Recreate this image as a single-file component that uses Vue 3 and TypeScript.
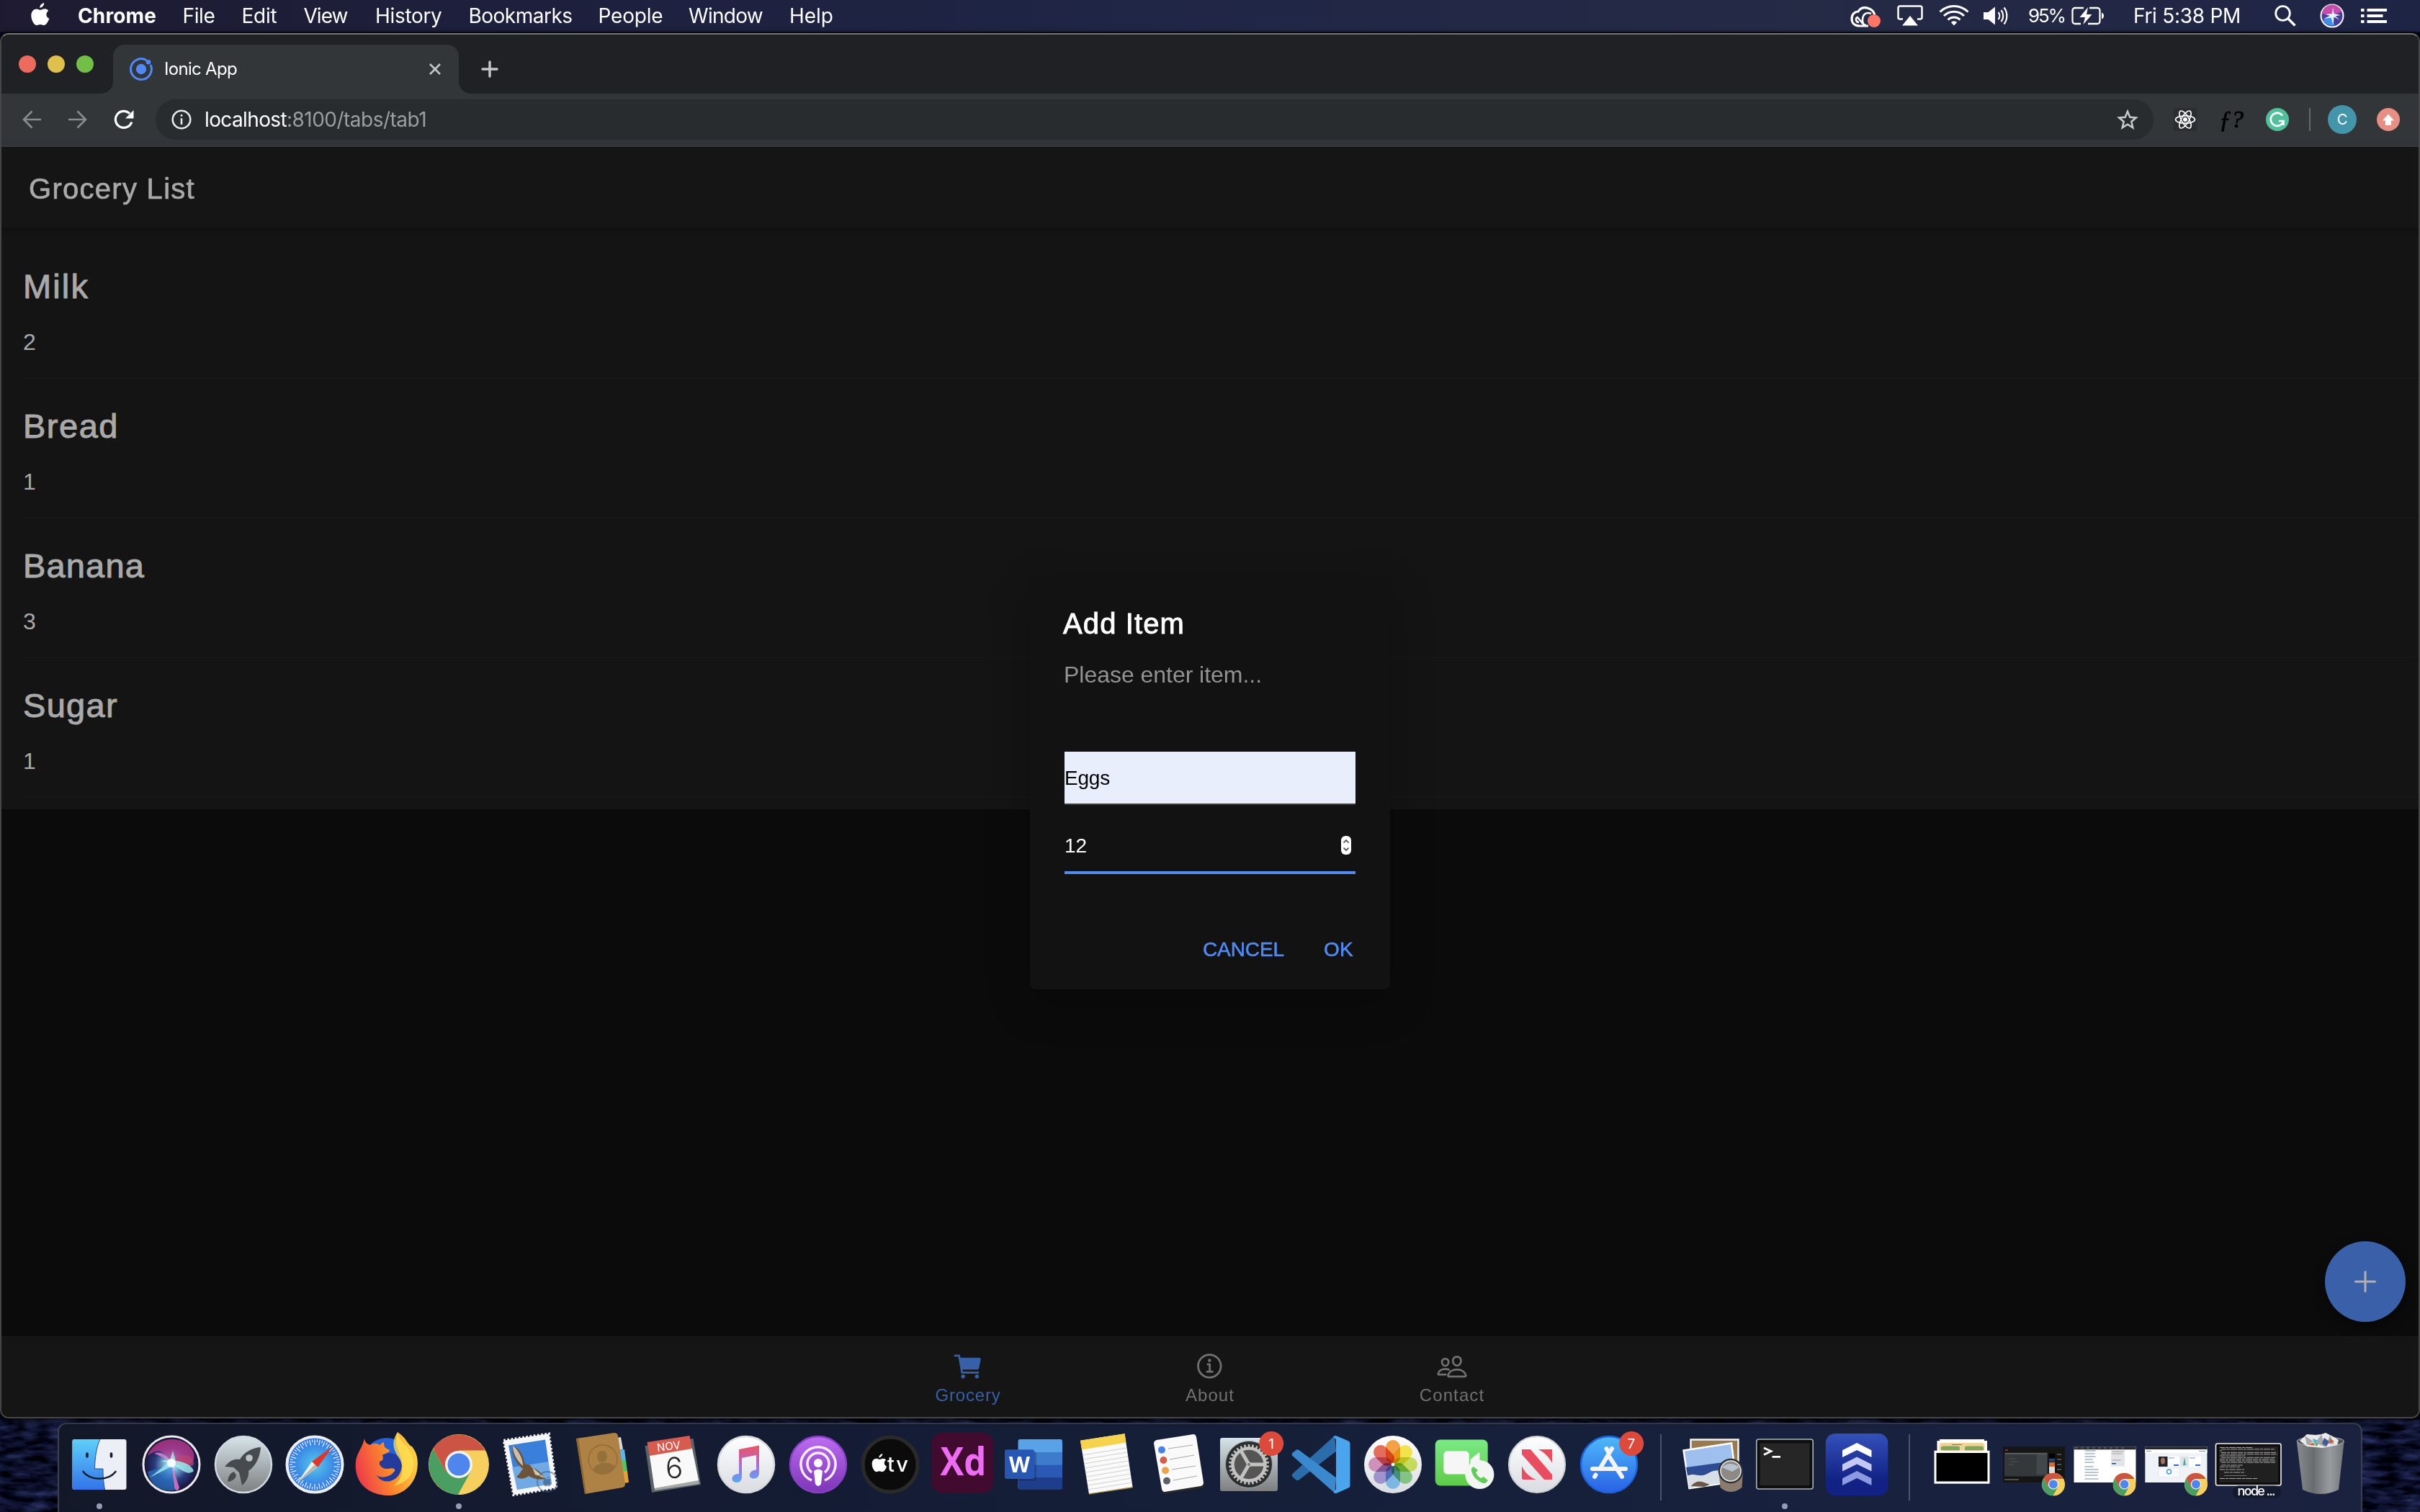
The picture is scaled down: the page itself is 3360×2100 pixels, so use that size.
<script setup lang="ts">
import type { Directive } from 'vue'

interface MenuEntry { label: string; slot: number; text: number; bold?: boolean }
interface GroceryItem { name: string; qty: number }

const menus: MenuEntry[] = [
  { label: 'Chrome', slot: 145.5, text: 109, bold: true },
  { label: 'File', slot: 82, text: 45 },
  { label: 'Edit', slot: 86, text: 49 },
  { label: 'View', slot: 99.5, text: 61 },
  { label: 'History', slot: 129.5, text: 92.5 },
  { label: 'Bookmarks', slot: 180, text: 144 },
  { label: 'People', slot: 125.5, text: 90 },
  { label: 'Window', slot: 140, text: 103 },
  { label: 'Help', slot: 80, text: 61 },
]

const groceries: GroceryItem[] = [
  { name: 'Milk', qty: 2 },
  { name: 'Bread', qty: 1 },
  { name: 'Banana', qty: 3 },
  { name: 'Sugar', qty: 1 },
]
const nameWidths = [92, 133, 169, 132]

const petals = ['#f29a38', '#f3e03c', '#c3d84e', '#7cc07c', '#74b2e2', '#9a8cc8', '#cc88b4', '#e2604e']
const teeth = Array.from({ length: 30 }, (_, i) => i * 12)
const ticks = Array.from({ length: 60 }, (_, i) => i * 6)

// Tracks a label so that it spans the given width
const vFit: Directive<HTMLElement, number> = {
  mounted(el, { value }) {
    const n = (el.textContent ?? '').length
    el.style.letterSpacing = `${(value - el.getBoundingClientRect().width) / n}px`
  },
}
</script>

<template>
  <div class="desktop">
    <svg class="defs" width="0" height="0">
      <defs>
        <filter id="waves" x="0" y="0" width="100%" height="100%" color-interpolation-filters="sRGB">
          <feTurbulence type="fractalNoise" baseFrequency="0.03 0.11" numOctaves="4" seed="6" />
          <feColorMatrix values="0.3 0 0 0 -0.1  0.35 0 0 0 -0.11  0.6 0 0 0 -0.13  0 0 0 0 1" />
        </filter>
        <linearGradient id="silver" x1="0" y1="0" x2="0" y2="1">
          <stop offset="0" stop-color="#d6e4ea" /><stop offset="1" stop-color="#7e7f80" />
        </linearGradient>
        <linearGradient id="pearl" x1="0" y1="0" x2="0" y2="1">
          <stop offset="0" stop-color="#ffffff" /><stop offset="1" stop-color="#d9dce2" />
        </linearGradient>
        <radialGradient id="siri" cx=".5" cy=".5" r=".5">
          <stop offset="0" stop-color="#e8ffff" /><stop offset=".2" stop-color="#8ac6ea" />
          <stop offset=".6" stop-color="#2a3a7c" /><stop offset="1" stop-color="#150f30" />
        </radialGradient>
        <symbol id="chrome" viewBox="0 0 84 84">
          <circle cx="42" cy="42" r="42" fill="#f6cf5f" />
          <path d="M42 42L6.500 19.500A42 42 0 0 1 78.500 22.500H42z" fill="#cc5444" />
          <path d="M6.500 20.500A42 42 0 0 0 41 84L59 51L42 42L24 52z" fill="#4a9e62" />
          <path d="M6.500 20.500L24 52L42 42L42 22z" fill="#cc5444" />
          <path d="M78.500 22.800A42 42 0 0 1 41 84L60 50L54 23z" fill="#f6cf5f" />
          <circle cx="42" cy="42" r="19" fill="#f4f4f4" />
          <circle cx="42" cy="42" r="15.500" fill="#4f86ee" />
        </symbol>
        <symbol id="apple" viewBox="0 0 28 34">
          <path d="M19.500 0c.3 3-2.300 7-6.300 7.300C12.800 4.200 16 .6 19.500 0zM26 11.600c-4.700 3.300-3.700 9.600 1.200 11.600C25.500 28 22.500 33 19.300 33c-2.200 0-2.900-1.200-5.400-1.200S10.600 33 8.500 33C5 33 .5 25.500.5 18.500.5 12.500 4.300 8.900 8.400 8.900c2.600 0 4.200 1.500 5.900 1.500 1.600 0 3.500-1.700 6.500-1.700 2.200 0 4.200 1.200 5.200 2.900z" />
        </symbol>
      </defs>
    </svg>

    <header class="menubar">
      <svg class="apple" width="28" height="32" viewBox="0 0 28 34"><use href="#apple" fill="#fff" /></svg>
      <nav class="menus">
        <div v-for="m in menus" :key="m.label" :style="{ width: m.slot + 'px' }">
          <span v-fit="m.text" class="fit" :class="{ bold: m.bold }">{{ m.label }}</span>
        </div>
      </nav>
      <div class="status">
        <svg class="s-cc" width="44" height="30" viewBox="0 0 44 30" fill="none" stroke="#fff" stroke-width="3.200">
          <path d="M25 27H13C5 27 2 22 2 17c0-7 5-10 9-10C14 2 19 0.500 25 2.500c5 1.500 8 6 9 9" />
          <path d="M22 26c-5 0-5-5-5-7 0-8 5-12 12-9M20 27L10 15c-3 0-3 7 2 7" stroke-width="2.600" />
          <circle cx="33" cy="20" r="9" fill="#ff7566" stroke="none" />
        </svg>
        <svg class="s-air" width="36" height="30" viewBox="0 0 36 30">
          <path d="M8 19.500H4a2.500 2.500 0 0 1-2.500-2.500V4A2.500 2.500 0 0 1 4 1.500h28A2.500 2.500 0 0 1 34.500 4v13a2.500 2.500 0 0 1-2.500 2.500h-4" fill="none" stroke="#fff" stroke-width="2.500" />
          <path d="M18 15l11 13.500H7z" fill="#fff" />
        </svg>
        <svg class="s-wifi" width="42" height="30" viewBox="0 0 42 30" fill="none" stroke="#fff" stroke-width="3">
          <path d="M1.500 10.500a27.500 27.500 0 0 1 39 0M7 16a19.700 19.700 0 0 1 28 0M12.500 21.500a12 12 0 0 1 17 0" />
          <path d="M21 29.500l-4.200-4.500a6 6 0 0 1 8.400 0z" fill="#fff" stroke="none" />
        </svg>
        <svg class="s-vol" width="34" height="26" viewBox="0 0 34 26">
          <path d="M0 8h6.500L16 0.500v25L6.500 18H0z" fill="#fff" />
          <path d="M20.500 8a8 8 0 0 1 0 10M24.500 5a13 13 0 0 1 0 16M28.500 1.500a19 19 0 0 1 0 23" fill="none" stroke="#fff" stroke-width="2.200" />
        </svg>
        <div class="s-pct"><span v-fit="51" class="fit">95%</span></div>
        <svg class="s-bat" width="46" height="26" viewBox="0 0 46 26">
          <path d="M17 2H5a3.500 3.500 0 0 0-3.500 3.500v15A3.500 3.500 0 0 0 5 24h8M25 2h11a3.500 3.500 0 0 1 3.500 3.500v15A3.500 3.500 0 0 1 36 24H23" fill="none" stroke="#fff" stroke-width="2.300" />
          <path d="M42 8.500c4 1 4 8 0 9z" fill="#fff" />
          <path d="M23 1L11.500 15H19l-2.500 10L28.500 11H21z" fill="#fff" />
        </svg>
        <div class="s-clock"><span v-fit="149" class="fit">Fri 5:38 PM</span></div>
        <svg class="s-find" width="30" height="30" viewBox="0 0 30 30" fill="none" stroke="#fff" stroke-width="2.800">
          <circle cx="11.500" cy="11.500" r="9.800" /><path d="M18.500 18.500L28.500 28.500" stroke-width="3.400" />
        </svg>
        <svg class="s-siri" width="34" height="34" viewBox="0 0 34 34">
          <circle cx="17" cy="17" r="15.500" fill="#493d9c" stroke="#fff" stroke-width="2" />
          <path d="M2.500 14a14.500 14.500 0 0 1 28-3L17 17z" fill="#c44cae" />
          <path d="M4 23L17 15l3 15a14 14 0 0 1-16-7z" fill="#3f8fe8" />
          <path d="M5 21l9-4-6-2 9-1 1-9 1.500 9 9 2-7 1.500 6 5-8-4-1 11-3-10z" fill="#e6f6ff" />
        </svg>
        <svg width="36" height="20" viewBox="0 0 36 20" fill="#fff">
          <path d="M0 0h4.500v4H0zM8.500 0H36v4H8.500zM0 8h4.500v4H0zM8.500 8h22v4h-22zM0 16h4.500v4H0zM8.500 16H36v4H8.500z" />
        </svg>
      </div>
    </header>

    <main class="window">
      <div class="strip">
        <div class="lights"><i class="red" /><i class="yellow" /><i class="green" /></div>
        <div class="tab">
          <svg width="32" height="32" viewBox="0 0 32 32">
            <path d="M23.500 3.800A14.400 14.400 0 1 0 29 10" fill="none" stroke="#5089f5" stroke-width="3" />
            <circle cx="16" cy="16" r="7.200" fill="#5089f5" /><circle cx="26" cy="6.200" r="3.300" fill="#5089f5" />
          </svg>
          <div class="title"><span v-fit="101" class="fit">Ionic App</span></div>
          <svg width="16" height="16" viewBox="0 0 16 16" stroke="#c3c5c7" stroke-width="2.600"><path d="M1 1l14 14M15 1L1 15" /></svg>
        </div>
        <svg class="newtab" width="24" height="24" viewBox="0 0 24 24" stroke="#c6c7c9" stroke-width="3.400" stroke-linecap="round"><path d="M12 2v20M2 12h20" /></svg>
      </div>

      <div class="toolbar">
        <svg width="26" height="26" viewBox="0 0 26 26" fill="none" stroke="#898c8e" stroke-width="2.600"><path d="M26 13H2.500M13.500 1.500L2 13l11.500 11.500" /></svg>
        <svg class="fwd" width="26" height="26" viewBox="0 0 26 26" fill="none" stroke="#898c8e" stroke-width="2.600"><path d="M0 13h23.500M12.500 1.500L24 13 12.500 24.500" /></svg>
        <svg class="reload" width="28" height="28" viewBox="0 0 28 28"><path d="M24.800 17.500A11.500 11.500 0 1 1 22 5.700" fill="none" stroke="#fff" stroke-width="3.200" /><path d="M27.500 1v11.500H16z" fill="#fff" /></svg>
        <div class="omnibox">
          <svg width="28" height="28" viewBox="0 0 28 28"><circle cx="14" cy="14" r="12.300" fill="none" stroke="#e6e8ea" stroke-width="2.600" /><path d="M12.700 7h2.600v2.800h-2.600zM12.700 12.300h2.600V21h-2.600z" fill="#e6e8ea" /></svg>
          <div class="url"><span v-fit="114" class="fit">localhost</span><span v-fit="194" class="fit path">:8100/tabs/tab1</span></div>
          <svg width="30" height="28" viewBox="0 0 30 28"><path d="M15 2.800l3.300 7.900 8.500.7-6.500 5.600 2 8.300-7.300-4.500-7.300 4.500 2-8.300L3.200 11.400l8.500-.7z" fill="none" stroke="#c9cbcd" stroke-width="2.500" /></svg>
        </div>
        <svg class="react" width="32" height="32" viewBox="0 0 32 32">
          <rect width="32" height="32" rx="2" fill="#2b2e31" />
          <g fill="none" stroke="#fff" stroke-width="1.700">
            <ellipse cx="16" cy="16" rx="13.500" ry="5.200" /><ellipse cx="16" cy="16" rx="13.500" ry="5.200" transform="rotate(60 16 16)" /><ellipse cx="16" cy="16" rx="13.500" ry="5.200" transform="rotate(120 16 16)" />
          </g>
          <circle cx="16" cy="16" r="3" fill="#fff" />
        </svg>
        <span class="fq">ƒ?</span>
        <svg class="gram" width="32" height="32" viewBox="0 0 32 32"><circle cx="16" cy="16" r="16" fill="#52bf9b" /><path d="M23 10.500A9 9 0 1 0 24.500 18H18M24.500 17v7" fill="none" stroke="#fff" stroke-width="2.600" /></svg>
        <i class="divider" />
        <span class="avatar">C</span>
        <svg class="update" width="32" height="32" viewBox="0 0 32 32"><circle cx="16" cy="16" r="16" fill="#e88f85" /><path d="M16 8.500l8 9h-4v6.500h-8v-6.500H8z" fill="#fff" /></svg>
      </div>

      <section class="app">
        <div class="app-header"><span v-fit="231" class="fit">Grocery List</span></div>
        <div class="list">
          <div v-for="(g, i) in groceries" :key="g.name" class="item">
            <h1><span v-fit="nameWidths[i]" class="fit">{{ g.name }}</span></h1>
            <p>{{ g.qty }}</p>
          </div>
        </div>
        <div class="space" />
        <nav class="tabbar">
          <div class="tabitem active">
            <svg width="44" height="44" viewBox="0 0 512 512" fill="currentColor">
              <circle cx="176" cy="416" r="32" /><circle cx="400" cy="416" r="32" />
              <path d="M456.800 120.780A23.920 23.920 0 0 0 438.240 112H133.890L125.420 64H32v32h66.580l48 272H432v-32H173.420l-5.640-32h241.660A24.070 24.070 0 0 0 433 284.710l28.800-144a24 24 0 0 0-5-19.930z" />
            </svg>
            <span v-fit="91" class="fit">Grocery</span>
          </div>
          <div class="tabitem">
            <svg width="44" height="44" viewBox="0 0 512 512" fill="none" stroke="currentColor" stroke-width="32" stroke-linecap="round" stroke-linejoin="round">
              <path d="M248 64C146.390 64 64 146.390 64 248s82.390 184 184 184 184-82.390 184-184S349.610 64 248 64z" />
              <path d="M220 220h32v116M208 340h88" /><path d="M248 130a26 26 0 1 0 26 26 26 26 0 0 0-26-26z" fill="currentColor" stroke="none" />
            </svg>
            <span v-fit="68" class="fit">About</span>
          </div>
          <div class="tabitem">
            <svg width="44" height="44" viewBox="0 0 512 512" fill="none" stroke="currentColor" stroke-width="32" stroke-linecap="round" stroke-linejoin="round">
              <path d="M402 168c-2.930 40.670-33.100 72-66 72s-63.120-31.320-66-72c-3-42.310 26.370-72 66-72s69 30.460 66 72z" />
              <path d="M336 304c-65.170 0-127.840 32.370-143.540 95.410-2.080 8.340 3.150 16.590 11.720 16.590h263.650c8.570 0 13.770-8.250 11.720-16.590C463.850 335.360 401.180 304 336 304z" />
              <path d="M200 185.940c-2.340 32.480-26.720 58.060-53 58.060s-50.700-25.570-53-58.060C91.610 152.150 115.340 128 147 128s55.390 24.770 53 57.940zM206 306c-18.050-8.270-37.930-11.450-59-11.450-52 0-102.100 25.850-114.650 76.200-1.650 6.660 2.530 13.250 9.370 13.250H154" />
            </svg>
            <span v-fit="90.500" class="fit">Contact</span>
          </div>
        </nav>

        <button class="fab" aria-label="Add">
          <svg width="32" height="32" viewBox="0 0 32 32" stroke="#b0b0b0" stroke-width="3" stroke-linecap="round"><path d="M16 2.500v27M2.500 16h27" /></svg>
        </button>

        <div class="alert">
          <h2><span v-fit="169" class="fit">Add Item</span></h2>
          <p class="msg"><span v-fit="275" class="fit">Please enter item...</span></p>
          <div class="field filled"><span v-fit="63" class="fit">Eggs</span></div>
          <div class="field focus">
            <span>12</span>
            <svg width="14" height="26" viewBox="0 0 14 26"><rect width="14" height="26" rx="6" fill="#fff" /><path d="M3.500 9.500L7 6l3.500 3.500M3.500 16.500L7 20l3.500-3.500" fill="none" stroke="#444" stroke-width="1.700" /></svg>
          </div>
          <div class="actions"><span v-fit="113" class="fit">CANCEL</span><span v-fit="41" class="fit">OK</span></div>
        </div>
      </section>
    </main>

    <svg class="sea" width="3360" height="130"><rect width="3360" height="130" filter="url(#waves)" /></svg>
    <footer class="dock">
      <div class="slot">
        <svg viewBox="0 0 100 120">
          <defs><linearGradient id="fb" x1="0" y1="0" x2="0" y2="1"><stop offset="0" stop-color="#5fd0fa" /><stop offset="1" stop-color="#3273ea" /></linearGradient></defs>
          <rect x="12.500" y="21" width="75" height="70" rx="3" fill="#eceff6" />
          <path d="M15.500 21H51c-5 10-7 24-7.500 41H55c0 12 1 20 2.500 29h-42a3 3 0 0 1-3-3V24a3 3 0 0 1 3-3z" fill="url(#fb)" />
          <path d="M51 21c-5 10-7 24-7.500 41H55c0 12 1 20 2.500 29" fill="none" stroke="#27518a" stroke-width="1" />
          <path d="M33 41v4M66.500 41v4" stroke="#14202e" stroke-width="3.600" stroke-linecap="round" />
          <path d="M27.500 66c10 13 35 13 45 0" fill="none" stroke="#14202e" stroke-width="2.600" stroke-linecap="round" />
          <circle class="dot" cx="50" cy="114" r="4" />
        </svg>
      </div>
      <div class="slot">
        <svg viewBox="0 0 100 120">
          <circle cx="50" cy="56" r="39" fill="url(#siri)" stroke="#ecebee" stroke-width="3" />
          <path d="M17 44C26 16 70 12 81 40c2 12-3 18-15 14-6-2-12-2-16 0C40 34 30 34 17 44z" fill="#c2388e" opacity=".75" />
          <path d="M50 56c12-18 28-16 31-2 1 8-18 2-31 2z" fill="#b94670" opacity=".7" />
          <path d="M17 66c3 22 26 30 40 25L50 56z" fill="#2b7ccf" opacity=".65" />
          <path d="M50 55l11 33c-2 7-7 4-7-4zM50 55c-12-22-25-14-23-14 8 3 16 7 23 14z" fill="#ef7bd0" opacity=".8" />
          <path d="M20 74l25-20-10-3 13-2 4-12 4 14c12 1 22 6 25 14-8 7-17-1-27-8z" fill="#a4f0ee" opacity=".8" />
          <circle cx="50" cy="54" r="6" fill="#fff" opacity=".9" />
        </svg>
      </div>
      <div class="slot">
        <svg viewBox="0 0 100 120">
          <circle cx="50" cy="56" r="39" fill="url(#silver)" stroke="#cfd9df" stroke-width="2.500" />
          <path d="M74 32c-13 1-23 7-29 17-9-1-14 2-21 10l12 1 8 7 4 18c6-5 10-12 9-20 10-7 16-19 17-33z" fill="#474b4e" /><circle cx="58" cy="47" r="4.800" fill="#b9c4c9" />
          <path d="M37 66c-6 2-8 7-9 14 7-1 11-4 12-9z" fill="#474b4e" />
        </svg>
      </div>
      <div class="slot">
        <svg viewBox="0 0 100 120">
          <defs><radialGradient id="saf"><stop offset="0" stop-color="#58c8e8" /><stop offset="1" stop-color="#2d6ee6" /></radialGradient></defs>
          <circle cx="50" cy="56" r="38.500" fill="url(#saf)" stroke="#eceef0" stroke-width="4" />
          <path v-for="t in ticks" :key="t" :d="t % 12 ? 'M50 21v4' : 'M50 21v8'" stroke="#dff0fa" stroke-width="1.300" :transform="`rotate(${t} 50 56)`" />
          <path d="M75 31L46 52l8 8z" fill="#e0352b" /><path d="M26 81l20-29 8 8z" fill="#eef0f0" /><path d="M26 81l24-25 4 4z" fill="#b5b5b5" />
        </svg>
      </div>
      <div class="slot">
        <svg viewBox="0 0 100 120">
          <defs><linearGradient id="ff" x1="0" y1=".6" x2="1" y2=".3"><stop offset="0" stop-color="#ee3a4a" /><stop offset=".5" stop-color="#fb8a2c" /><stop offset="1" stop-color="#fbd84a" /></linearGradient></defs>
          <circle cx="50" cy="52" r="33" fill="#2561d8" /><circle cx="53" cy="62" r="22" fill="#243a9c" />
          <path d="M19 20c1 6 4 8 8 9 5-3 9-3 13 0 3-1 2-3 6-4 0 3 0 5 2 8l6 3c0 4-8 5-10 7 2 6 0 8-3 8-4 5 3 12 11 11 7-2 10 0 9 3-7 10-21 10-25 6 8 15 34 10 35-14 0-20-13-25-6-46 12 8 12 14 19 20V30c9 10 10 22 8 34-4 22-22 36-42 35C23 98 4 80 7 52c1-12 9-18 12-32z" fill="url(#ff)" />
          <path d="M65 11c-10 14-5 26 2 36 8 12 5 30-8 39 26-6 34-26 24-47C76 27 66 22 65 11z" fill="#ffe354" opacity=".75" />
        </svg>
      </div>
      <div class="slot">
        <svg viewBox="0 0 100 120"><use href="#chrome" x="8" y="14" width="84" height="84" /><circle class="dot" cx="50" cy="114" r="4" /></svg>
      </div>
      <div class="slot">
        <svg viewBox="0 0 100 120">
          <path d="M14 24L74 15 84 87 27 96.500z" fill="#f6f6f6" stroke="#f6f6f6" stroke-width="3" />
          <path d="M14 24L74 15 84 87 27 96.500z" fill="none" stroke="#f6f6f6" stroke-width="3" stroke-dasharray="2.500 2.500" transform="translate(49 56) scale(1.050) translate(-49 -56)" />
          <path d="M19 29.500L70 21.500 79 83 31 91z" fill="#3a7fd9" /><path d="M23.500 60l51-8 4.500 31-48 8z" fill="#8fc0ea" opacity=".65" />
          <path d="M25 30c-3 14 6 26 14 32-4 5-6 9-9 11 6 5 13 2 17-1 7 4 15 6 24 4-5-4-7-12-20-16-1-4-6-5-9-4-2-12-7-22-17-26z" fill="#6d5338" /><path d="M25 30c0 10 5 20 14 28 0-10-6-22-14-28z" fill="#c9bfae" /><path d="M52 60l18 15-14-5z" fill="#d1c6b2" />
          <circle cx="73" cy="80" r="14" fill="none" stroke="#35557b" stroke-width="2" opacity=".5" /><use href="#apple" x="67" y="72" width="12" height="15" fill="#35557b" opacity=".6" />
        </svg>
      </div>
      <div class="slot">
        <svg viewBox="0 0 100 120">
          <path d="M69 19l6-1 3 17-6 1z" fill="#d5d9db" /><path d="M72 36l8-1 2 16-8 1z" fill="#59b5ea" /><path d="M74 51l8-1 2 16-8 1z" fill="#55c463" /><path d="M76 66l8-1 2 16-8 1z" fill="#e5a13e" />
          <path d="M13 20l53-8q4 0 5 4l10 67q0 4-4 5L25 97z" fill="#ae8145" /><path d="M13 20l3-.5 11 77-2 .5z" fill="#8f6731" />
          <circle cx="50" cy="49" r="20" fill="none" stroke="#916a36" stroke-width="1.300" /><ellipse cx="49" cy="45" rx="7" ry="8" fill="#94703b" /><path d="M36 64c4-12 25-14 31-4-6 11-22 14-31 4z" fill="#94703b" />
        </svg>
      </div>
      <div class="slot">
        <svg viewBox="0 0 100 120">
          <path d="M9.500 30l67-10 10.500 64-68 11z" fill="#5c6468" /><path d="M17 44l58-10 10 49-62 9z" fill="#a5a8a8" /><path d="M15.800 43l59-10L84 78 22.600 89z" fill="#f9f9f9" /><path d="M12.500 25l59-9 3.300 18-59 10z" fill="#d85b50" />
          <text x="43" y="36" transform="rotate(-7 43 36)" font-size="15" fill="#fff" text-anchor="middle" class="inter">NOV</text>
          <text x="50" y="75" transform="rotate(-3 50 60)" font-size="40" font-weight="300" fill="#252525" text-anchor="middle" class="inter">6</text>
        </svg>
      </div>
      <div class="slot">
        <svg viewBox="0 0 100 120">
          <defs><linearGradient id="mus" x1="0" y1="0" x2="0" y2="1"><stop offset="0" stop-color="#f0525e" /><stop offset=".5" stop-color="#b06ad0" /><stop offset="1" stop-color="#54a8f8" /></linearGradient></defs>
          <circle cx="50" cy="56" r="39" fill="url(#pearl)" stroke="#d6d8dc" stroke-width="2.500" />
          <path d="M40 35l28-5.500v38c0 5-3 8-7 8s-7-2-6-6 5-6 9-6V43l-20 4v26c0 5-3 8-7 8s-7-2-6.500-6 5-6 9.500-6z" fill="url(#mus)" />
        </svg>
      </div>
      <div class="slot">
        <svg viewBox="0 0 100 120">
          <defs><linearGradient id="pod" x1="0" y1="0" x2="0" y2="1"><stop offset="0" stop-color="#bd6cf0" /><stop offset="1" stop-color="#7e35b8" /></linearGradient></defs>
          <circle cx="50" cy="56" r="39" fill="url(#pod)" stroke="#8a40c6" stroke-width="2.500" />
          <g fill="none" stroke="#f5eefa" stroke-width="3.500"><path d="M41 78a24 24 0 1 1 18 0" /><path d="M41 67a15 15 0 1 1 18 0" /></g>
          <circle cx="50" cy="54" r="6" fill="#fff" /><path d="M44 65q6-5 12 0l-2 18q-4 6-8 0z" fill="#fff" />
        </svg>
      </div>
      <div class="slot">
        <svg viewBox="0 0 100 120">
          <circle cx="50" cy="56" r="38" fill="#0b0b0b" stroke="#2a2a2b" stroke-width="5" />
          <use href="#apple" x="24" y="41" width="22" height="26" fill="#fff" /><text x="46" y="66" font-size="29" font-weight="500" fill="#fff" textLength="29" class="inter">tv</text>
        </svg>
      </div>
      <div class="slot">
        <svg viewBox="0 0 100 120">
          <rect x="7.300" y="12" width="86" height="83.500" rx="15" fill="#410b30" /><text x="19.500" y="71" font-size="53" font-weight="700" fill="#ee6cf4" textLength="64" lengthAdjust="spacingAndGlyphs" class="opens">Xd</text>
        </svg>
      </div>
      <div class="slot">
        <svg viewBox="0 0 100 120">
          <rect x="28.500" y="21" width="61.500" height="69.300" rx="3" fill="#5aa2e8" /><path d="M28.500 39H90v17.500H28.500z" fill="#3d7bcd" /><path d="M28.500 56.500H90V74H28.500z" fill="#2b59b6" /><path d="M28.500 74H90v13.300a3 3 0 0 1-3 3H31.500a3 3 0 0 1-3-3z" fill="#1e3e8b" />
          <rect x="12" y="38" width="42" height="41" rx="3" fill="#0d1d44" opacity=".3" /><rect x="10" y="35.300" width="41" height="40.700" rx="3" fill="#2757b2" /><text x="30.500" y="67" font-size="31" font-weight="700" text-anchor="middle" fill="#fff" textLength="29" lengthAdjust="spacingAndGlyphs" class="opens">W</text>
        </svg>
      </div>
      <div class="slot">
        <svg viewBox="0 0 100 120">
          <path d="M15 22.700l61.600-9.400 11 74.400-60.600 9.300z" fill="#fafafa" /><path d="M15 22.700l61.600-9.400 1.800 12.200-61.400 10z" fill="#f7d24c" /><path d="M27 97l60.600-9.300" stroke="#a58a3a" stroke-width="1.400" />
          <path d="M18 43l61-10M19 49l61-10M20 55l61-10M21 61l61-10M22 67l61-10M23 73l61-10M24 79l61-10M25 85l61-10M26 91l61-10" stroke="#d0d0d0" stroke-width="1" />
        </svg>
      </div>
      <div class="slot">
        <svg viewBox="0 0 100 120">
          <path d="M21 25l52-8q3 0 4 4l10 64q0 3-4 4l-51 8q-3 0-4-4z" fill="#26282c" /><path d="M21 22l51-8q3 0 4 4l10 63q0 4-4 5l-50 8q-3 0-4-4L17 27q0-4 4-5z" fill="#fafafa" />
          <circle cx="28" cy="35.700" r="5" fill="#4583ee" /><circle cx="30.400" cy="50" r="5" fill="#d85b4b" /><circle cx="33" cy="64.300" r="5" fill="#e8a44c" /><circle cx="35" cy="78.700" r="5" fill="#5c6069" />
          <path d="M37 34l34-5M39 49l34-6M42 63l33-5M44 78l33-6" stroke="#a7a7a7" stroke-width="1" />
        </svg>
      </div>
      <div class="slot">
        <svg viewBox="0 0 100 120">
          <rect x="9" y="19" width="80" height="74" rx="3" fill="url(#silver)" /><circle cx="49" cy="56" r="32.500" fill="#2d2e2f" stroke="#9ea5a9" stroke-width="1" />
          <circle cx="49" cy="56" r="22.500" fill="#555" stroke="#c2c2c0" stroke-width="4.500" />
          <path v-for="t in teeth" :key="t" d="M49 28v5" stroke="#c2c2c0" stroke-width="2.600" :transform="`rotate(${t} 49 56)`" />
          <path d="M49 56h22M49 56L38 37M49 56L38 75" stroke="#c2c2c0" stroke-width="5" /><circle cx="49" cy="56" r="3" fill="#7b8288" stroke="#ddd" />
          <circle cx="80.200" cy="27" r="17" fill="#dd493b" /><text x="80" y="33.500" font-size="19" fill="#fff" text-anchor="middle" class="inter">1</text>
        </svg>
      </div>
      <div class="slot">
        <svg viewBox="0 0 100 120">
          <path d="M68 16L9.500 69q-1.500 2 0 4l5 4.500q2 1 4 0L70 37.700z" fill="#2b6cab" /><path d="M14.500 36q2-1.500 4 0L70 74.300 68.500 96 9.500 44q-1.500-2 0-4z" fill="#3a88cd" /><path d="M66 17.500q2-2.500 5-1l16.500 7q2 1 2 3.500v58q0 2.500-2 3.500l-17 7.500q-2 .5-4-1l3.500-5V21z" fill="#4aa5ee" />
        </svg>
      </div>
      <div class="slot">
        <svg viewBox="0 0 100 120">
          <circle cx="50" cy="56" r="40" fill="url(#pearl)" />
          <g class="petals"><rect v-for="(c, i) in petals" :key="c" x="40" y="22" width="20" height="33" rx="10" :fill="c" :transform="`rotate(${i * 45} 50 56)`" /></g>
          <circle cx="50" cy="56" r="2.300" fill="#fff" />
        </svg>
      </div>
      <div class="slot">
        <svg viewBox="0 0 100 120">
          <defs><linearGradient id="ft" x1="0" y1="0" x2="0" y2="1"><stop offset="0" stop-color="#7aea84" /><stop offset="1" stop-color="#5fcb49" /></linearGradient></defs>
          <rect x="8.700" y="21.500" width="73" height="64" rx="7" fill="url(#ft)" /><rect x="20.400" y="37.500" width="35.400" height="32" rx="5" fill="#f6f6f6" /><path d="M57.500 49l11-9q2-1.500 2 1v26l-13-8z" fill="#f6f6f6" />
          <circle cx="70.400" cy="70" r="20" fill="#f3f5f2" /><path d="M62 59q-4 2-3 6 3 12 16 17 4 1 7-4l-6-5-4 2q-5-3-7-8l3-3z" fill="#60ce56" />
        </svg>
      </div>
      <div class="slot">
        <svg viewBox="0 0 100 120">
          <circle cx="50" cy="56" r="39" fill="url(#pearl)" stroke="#ced1d5" stroke-width="2.200" />
          <path d="M29 35h12l30 35v7H60L29 42zM52 35h19v19C67 46 60 39 52 35zM29 58c3 8 11 16 20 19H31q-2 0-2-2z" fill="#ea4d60" />
        </svg>
      </div>
      <div class="slot">
        <svg viewBox="0 0 100 120">
          <defs><linearGradient id="as" x1="0" y1="0" x2="0" y2="1"><stop offset="0" stop-color="#4fb9fa" /><stop offset="1" stop-color="#2961e6" /></linearGradient></defs>
          <circle cx="50" cy="56" r="39" fill="url(#as)" stroke="#1c63df" stroke-width="2.500" />
          <path d="M27 62h46M54 34L39 59M46.500 34L50 40M51 46l17 27M31.500 70.500L30 73" fill="none" stroke="#f4f4f4" stroke-width="6" stroke-linecap="round" />
          <circle cx="81.200" cy="27" r="17" fill="#dd493b" /><text x="81" y="33.500" font-size="19" fill="#fff" text-anchor="middle" class="inter">7</text>
        </svg>
      </div>
      <div class="sep first"><i /></div>
      <div class="slot">
        <svg viewBox="0 0 100 120">
          <rect x="19.500" y="21.500" width="66" height="55" fill="#9a7a50" stroke="#f5f5f5" stroke-width="2.500" />
          <path d="M9.500 36.500L76 26.500l7 53L17.500 89z" fill="#9fc0ee" stroke="#fff" stroke-width="2.500" /><path d="M13 60l66-9 4 27-65 10z" fill="#2e4c93" /><path d="M14 72c12-6 18 4 30-4s22 0 37-4l2 15-65 9z" fill="#d7dee6" /><path d="M20 86c8-10 16-6 26-2l-8 3zM60 72l20-3 2 9-15 3z" fill="#6c5744" />
          <path d="M58.500 66l2 22q14 12 30 0l1.500-22z" fill="#8a7b6e" /><circle cx="75" cy="65" r="16" fill="#8d8a86" stroke="#2e3034" stroke-width="2.500" /><circle cx="75" cy="65" r="14" fill="none" stroke="#dfe3e6" stroke-width="1.500" /><path d="M63 60q11-10 24 0l-10 6z" fill="#b8c3d2" />
        </svg>
      </div>
      <div class="slot">
        <svg viewBox="0 0 100 120">
          <rect x="10.800" y="21" width="78.400" height="69" rx="3" fill="#0e0e0e" stroke="#a9b6bd" stroke-width="1.600" /><rect x="15.500" y="26.500" width="69" height="58.500" fill="#262626" />
          <path d="M21 33l10 4.500L21 42.500M32.500 45.300h11.500" fill="none" stroke="#fff" stroke-width="2.800" /><circle class="dot" cx="50" cy="114" r="4" />
        </svg>
      </div>
      <div class="slot">
        <svg viewBox="0 0 100 120">
          <defs><linearGradient id="chev" x1="0" y1="0" x2="0" y2="1"><stop offset="0" stop-color="#3450ba" /><stop offset=".75" stop-color="#112284" /></linearGradient></defs>
          <rect x="6.800" y="13" width="86.500" height="86" rx="13" fill="url(#chev)" />
          <path d="M50.200 26l20.300 10.300V46L50.200 36 30 46v-9.700z" fill="#fff" /><path d="M50.200 45.500l20.300 10.300v9.700l-20.300-10L30 65.500v-9.700z" fill="#c3c9f2" /><path d="M50.200 65l20.300 10.300V85l-20.300-10L30 85v-9.700z" fill="#8c9ae0" />
        </svg>
      </div>
      <div class="sep second"><i /></div>
      <div class="slot">
        <svg viewBox="0 0 100 120">
          <path d="M19 21h62v5H19z" fill="#fff" /><rect x="15.500" y="23" width="69.500" height="20" fill="#fff" /><rect x="18.500" y="26" width="63" height="14" rx="4" fill="#f3d296" /><path d="M21 32q1-1.500 3-1.500h20q2 0 3 1.500v4H21zM54 32q1-1.500 3-1.500h20q2 0 3 1.500v4H54z" fill="#7aa85a" /><path d="M36 28.500h14" stroke="#8c7345" stroke-width="1" /><path d="M23 36h23M55 36h23" stroke="#e06a35" />
          <rect x="11.500" y="36.700" width="77" height="46" fill="#fff" /><rect x="14.500" y="40" width="71" height="39.500" fill="#000" />
        </svg>
      </div>
      <div class="slot">
        <svg viewBox="0 0 100 120">
          <rect x="7" y="31.300" width="86" height="49.700" fill="#151515" /><rect x="9" y="39.500" width="60" height="33" fill="#34383a" /><path d="M10 41h58" stroke="#565b5e" stroke-width="2" /><path d="M14 48h10M17 52h12M14 56h8" stroke="#565b5e" stroke-width=".8" /><rect x="54" y="42" width="14" height="28" fill="#41484b" /><path d="M9 73.500h60" stroke="#071a24" /><path d="M9 77h20" stroke="#888" stroke-width="1" /><path d="M10 36h4" stroke="#c33" stroke-width="1.500" />
          <path d="M71 41h8v6h-8z" fill="#000" /><path d="M71 48h8v4h-8z" fill="#26447a" /><path d="M71 53h8v6h-8z" fill="#d66b35" /><path d="M71 59h8v9h-8z" fill="#ddd" /><path d="M82 42h6M82 49h6M82 56h6M82 63h6" stroke="#888" stroke-width="1" />
          <use href="#chrome" x="61" y="67.500" width="32" height="32" />
        </svg>
      </div>
      <div class="slot">
        <svg viewBox="0 0 100 120">
          <rect x="5.500" y="31.300" width="86" height="49.700" fill="#fff" /><path d="M5.500 31.300h86v4h-86z" fill="#25282b" /><path d="M7 33h70" stroke="#888" stroke-width=".8" stroke-dasharray="4 4" />
          <path d="M20.500 37h15M20.500 41h14M20.500 45h15M20.500 49h11M20.500 53h13M20.500 59h12M20.500 63h19M20.500 67h19M20.500 71h18M20.500 76h19" stroke="#6f8ba0" stroke-width="1.200" /><rect x="57" y="35.500" width="19" height="23" fill="#e4e4e8" /><path d="M58.500 38h16M58.500 41h14M58.500 50h12" stroke="#9da2a8" stroke-width="1" /><path d="M58 54h6v1.500h-6z" fill="#1a5072" />
          <use href="#chrome" x="59.600" y="67.500" width="32" height="32" />
        </svg>
      </div>
      <div class="slot">
        <svg viewBox="0 0 100 120">
          <rect x="5.300" y="31.300" width="86.200" height="49.700" fill="#eff2f6" /><path d="M5.300 31.300h86.200v3.700H5.300z" fill="#25282b" /><path d="M5.300 35h86.200v5H5.300z" fill="#fff" /><path d="M7 37.500h7M80 37.500h9" stroke="#889" stroke-width="1" />
          <rect x="24" y="45" width="29" height="14" fill="#fff" /><rect x="54" y="45" width="29" height="14" fill="#fff" /><rect x="24" y="61" width="29" height="13" fill="#f7f9fb" stroke="#dfe3e8" stroke-width=".6" /><rect x="24" y="45" width="12.500" height="14" fill="#20242c" /><ellipse cx="30" cy="51" rx="3" ry="4.500" fill="#a9735b" /><rect x="54" y="45" width="12" height="14" fill="#dfe4e3" /><path d="M60 46l-2 11h4z" fill="#4aa4a4" /><circle cx="38.500" cy="66" r="3" fill="none" stroke="#4a9ac2" stroke-width="1.400" />
          <path d="M38 47h8M67 47h8" stroke="#7893ca" stroke-width="1" /><path d="M45 56h7v2h-7zM75 56h7v2h-7z" fill="#3867d0" />
          <use href="#chrome" x="60" y="67.500" width="32" height="32" />
        </svg>
      </div>
      <div class="slot">
        <svg viewBox="0 0 100 120">
          <rect x="3.500" y="27" width="90.500" height="58" rx="2.500" fill="#0c0c0c" stroke="#f2f2f2" stroke-width="1.600" /><rect x="8" y="31" width="82" height="50" fill="#202020" />
          <path d="M9 32.500h45M11 34.800h74M9 37h3M11 39.400h76M11 41.700h78M9 44h36M11 46.300h75M9 48.600h76M9 51h78M11 53.200h75M11 57h30M9 59.300h28M9 63h34M15 67h28M9 75.500h52" stroke="#a2a2a2" stroke-width="1" stroke-dasharray="7 1 4 1 9 1" /><path d="M15 71.500h31" stroke="#77782f" stroke-width="1" />
          <rect x="27" y="85.500" width="67" height="17" rx="8" fill="#141a2d" /><text x="33.500" y="98.500" font-size="18" font-weight="500" fill="#fff" textLength="53" class="inter">node ...</text>
        </svg>
      </div>
      <div class="slot">
        <svg viewBox="0 0 100 120">
          <defs><linearGradient id="bin" x1="0" y1="0" x2="1" y2="0"><stop offset="0" stop-color="#888b8d" /><stop offset=".35" stop-color="#696c6e" /><stop offset=".7" stop-color="#999c9e" /><stop offset="1" stop-color="#747779" /></linearGradient></defs>
          <path d="M16 25l8 66q25 12 50 0l7.500-66q-32 12-65.500 0z" fill="url(#bin)" /><ellipse cx="48.800" cy="24" rx="32.500" ry="6.500" fill="#4c4f52" stroke="#9b9ea0" stroke-width="1.400" />
          <path d="M20 23l10-9 12 1 8-1 6-2 10 5 8 5-2 7-20 4-22-2z" fill="#e9e9e9" /><path d="M27 16l12 8-9 5zM50 14l-8 12 14 6zM62 15l-4 12 10 1z" fill="#a8a8aa" /><path d="M38 20l8 3-6 4z" fill="#48b5d4" /><path d="M54 19l7 5-4 7-6-4z" fill="#425c98" /><path d="M62 20l6 4-7 3zM31 28l8-2 2 4z" fill="#c35d3a" /><path d="M40 26l6 1-3 4z" fill="#4fa866" />
        </svg>
      </div>
    </footer>
  </div>
</template>

<style>
html, body { margin: 0; background: #060814; overflow: hidden; }
</style>

<style scoped>
.desktop { position: relative; width: 3360px; height: 2100px; overflow: hidden; display: flex; flex-direction: column; background: #050917; font-family: Inter, "Liberation Sans", sans-serif; color: #fff; }
.defs { position: absolute; }
.fit { display: inline-block; white-space: pre; }
svg { display: block; flex: none; }
.inter { font-family: Inter, sans-serif; }
.opens { font-family: "Open Sans", sans-serif; }

.menubar { height: 44px; flex: none; display: flex; align-items: center; font-size: 28px; line-height: 44px; background: linear-gradient(90deg, #1e1b31, #1d1f3c 20%, #1f2545 45%, #252a45 75%, #1e2444); border-bottom: 2px solid #070a19; position: relative; z-index: 1; }
.apple { margin: -5px 38px 0 42px; }
.menus { display: flex; flex: 1; white-space: nowrap; }
.bold { font-weight: 700; }
.status { display: flex; align-items: center; padding-right: 46px; }
.s-cc { margin-right: 21px; margin-top: 4px; }
.s-air { margin-right: 22px; }
.s-wifi { margin-right: 20px; margin-top: -2px; }
.s-vol { margin-right: 28px; }
.s-pct { width: 60px; font-size: 26px; }
.s-bat { margin-right: 40px; }
.s-clock { width: 196px; white-space: nowrap; }
.s-find { margin-right: 33px; }
.s-siri { margin-right: 23px; }

.window { box-sizing: border-box; height: 1924px; flex: none; border: 2px solid #454645; border-top-color: #747673; border-radius: 12px; overflow: hidden; display: flex; flex-direction: column; position: relative; z-index: 1; background: #0b0b0b; box-shadow: 0 2px 8px #000; }
.strip { height: 82px; flex: none; background: #202124; display: flex; align-items: flex-start; }
.lights { display: flex; gap: 16px; padding: 29px 0 0 23.500px; width: 131.500px; }
.lights i { width: 24px; height: 24px; border-radius: 50%; }
.red { background: #ed6a5e; }
.yellow { background: #e0c04c; }
.green { background: #72be47; }
.tab { box-sizing: border-box; position: relative; margin-top: 14px; width: 480px; height: 68px; background: #323639; border-radius: 16px 16px 0 0; display: flex; align-items: center; padding: 0 25px 0 23px; }
.tab::before, .tab::after { content: ""; position: absolute; bottom: 0; width: 16px; height: 16px; }
.tab::before { left: -16px; background: radial-gradient(circle at 0 0, transparent 15.500px, #323639 16px); }
.tab::after { right: -16px; background: radial-gradient(circle at 100% 0, transparent 15.500px, #323639 16px); }
.title { flex: 1; margin-left: 16px; font-size: 24px; line-height: 68px; white-space: nowrap; }
.newtab { margin: 36px 0 0 31px; }

.toolbar { box-sizing: border-box; height: 74px; flex: none; background: #323639; border-bottom: 2px solid #3c3f41; display: flex; align-items: center; padding-left: 29px; }
.fwd { margin-left: 38px; }
.reload { margin-left: 37px; }
.omnibox { box-sizing: border-box; width: 2774px; height: 56px; margin-left: 30px; border-radius: 28px; background: #282c2f; display: flex; align-items: center; padding: 0 21px 0 22px; }
.url { flex: 1; margin-left: 18px; font-size: 28px; line-height: 56px; white-space: nowrap; color: #fff; }
.path { color: #9a9fa3; }
.react { margin-left: 28px; }
.fq { width: 36px; margin-left: 31px; font: italic 34px/40px "Liberation Serif", serif; color: #000; white-space: nowrap; -webkit-text-stroke: .8px #000; }
.gram { margin-left: 29px; }
.divider { width: 2px; height: 32px; margin-left: 28px; background: #64686b; }
.avatar { width: 40px; height: 40px; margin-left: 24px; border-radius: 50%; background: #4396aa; font-size: 20px; line-height: 40px; text-align: center; }
.update { margin-left: 28px; }

.app { position: relative; flex: 1; display: flex; flex-direction: column; font-family: "Liberation Sans", Arial, sans-serif; color: #a9a9a9; }
.app-header { position: relative; height: 112px; flex: none; background: #151515; font-size: 40px; line-height: 117px; padding-left: 38px; -webkit-text-stroke: .7px currentColor; box-shadow: 0 2px 10px rgba(0, 0, 0, .22); }
.list { box-sizing: border-box; height: 808px; flex: none; padding: 16px 0; background: #141414; }
.item { box-sizing: border-box; height: 194px; margin-left: 30px; border-bottom: 2px solid #171717; padding-top: 37px; }
.item h1 { margin: 0; font-size: 47px; line-height: 58px; font-weight: 400; -webkit-text-stroke: 1px currentColor; }
.item p { margin: 28px 0 0; font-size: 32px; line-height: 40px; }
.space { flex: 1; }
.tabbar { box-sizing: border-box; height: 112px; flex: none; background: #151515; border-top: 2px solid #181818; display: flex; justify-content: center; }
.tabitem { width: 336px; display: flex; flex-direction: column; align-items: center; padding-top: 18px; color: #717171; font-size: 24px; line-height: 28px; }
.tabitem span { margin-top: 4px; }
.active { color: #3860a9; }
.fab { position: absolute; right: 18px; top: 1520px; width: 112px; height: 112px; border: 0; padding: 0; border-radius: 50%; background: #3960a9; display: flex; align-items: center; justify-content: center; box-shadow: 0 6px 16px rgba(0, 0, 0, .5); }

.alert { box-sizing: border-box; position: absolute; left: 1428px; top: 596px; width: 500px; height: 574px; padding: 42px 48px 0 46px; background: #121212; border-radius: 8px; box-shadow: 0 20px 60px 4px rgba(0, 0, 0, .2); }
.alert h2 { margin: 0; color: #fff; font-size: 40px; line-height: 48px; font-weight: 400; -webkit-text-stroke: .9px currentColor; }
.msg { margin: 27px 0 0 1px; font-size: 32px; line-height: 40px; color: #939393; }
.field { box-sizing: border-box; display: flex; align-items: center; width: 404px; margin-left: 2px; font-size: 28px; line-height: 72px; color: #fff; }
.field span { padding-top: 1px; }
.filled { height: 74px; margin-top: 87px; background: #e8eefb; border-bottom: 2px solid #3a3c40; color: #000; }
.focus { height: 76px; margin-top: 20px; border-bottom: 4px solid #538bf3; justify-content: space-between; padding-right: 6px; }
.actions { margin-top: 89px; display: flex; justify-content: flex-end; font-size: 28px; line-height: 32px; color: #4f8af7; -webkit-text-stroke: .6px currentColor; gap: 55px; padding-right: 3px; }

.sea { position: absolute; left: 0; top: 1970px; }
.dock { box-sizing: border-box; position: relative; width: 3200px; height: 140px; margin: 6px 0 0 80px; border: 2px solid #3a4052; border-radius: 12px; background: linear-gradient(90deg, #131829, #141c34 30%, #16203a 60%, #1a2240); display: flex; padding-left: 6px; flex: none; }
.slot { width: 99.800px; flex: none; }
.slot svg { width: 100px; height: 120px; overflow: visible; }
.dot { fill: #959cb6; }
.petals rect { mix-blend-mode: multiply; opacity: .92; }
.petals { isolation: isolate; }
.sep { flex: none; display: flex; justify-content: center; padding-top: 14px; }
.sep i { width: 2px; height: 92px; background: #4c546d; }
.first { width: 44.400px; }
.second { width: 46.600px; }
</style>
